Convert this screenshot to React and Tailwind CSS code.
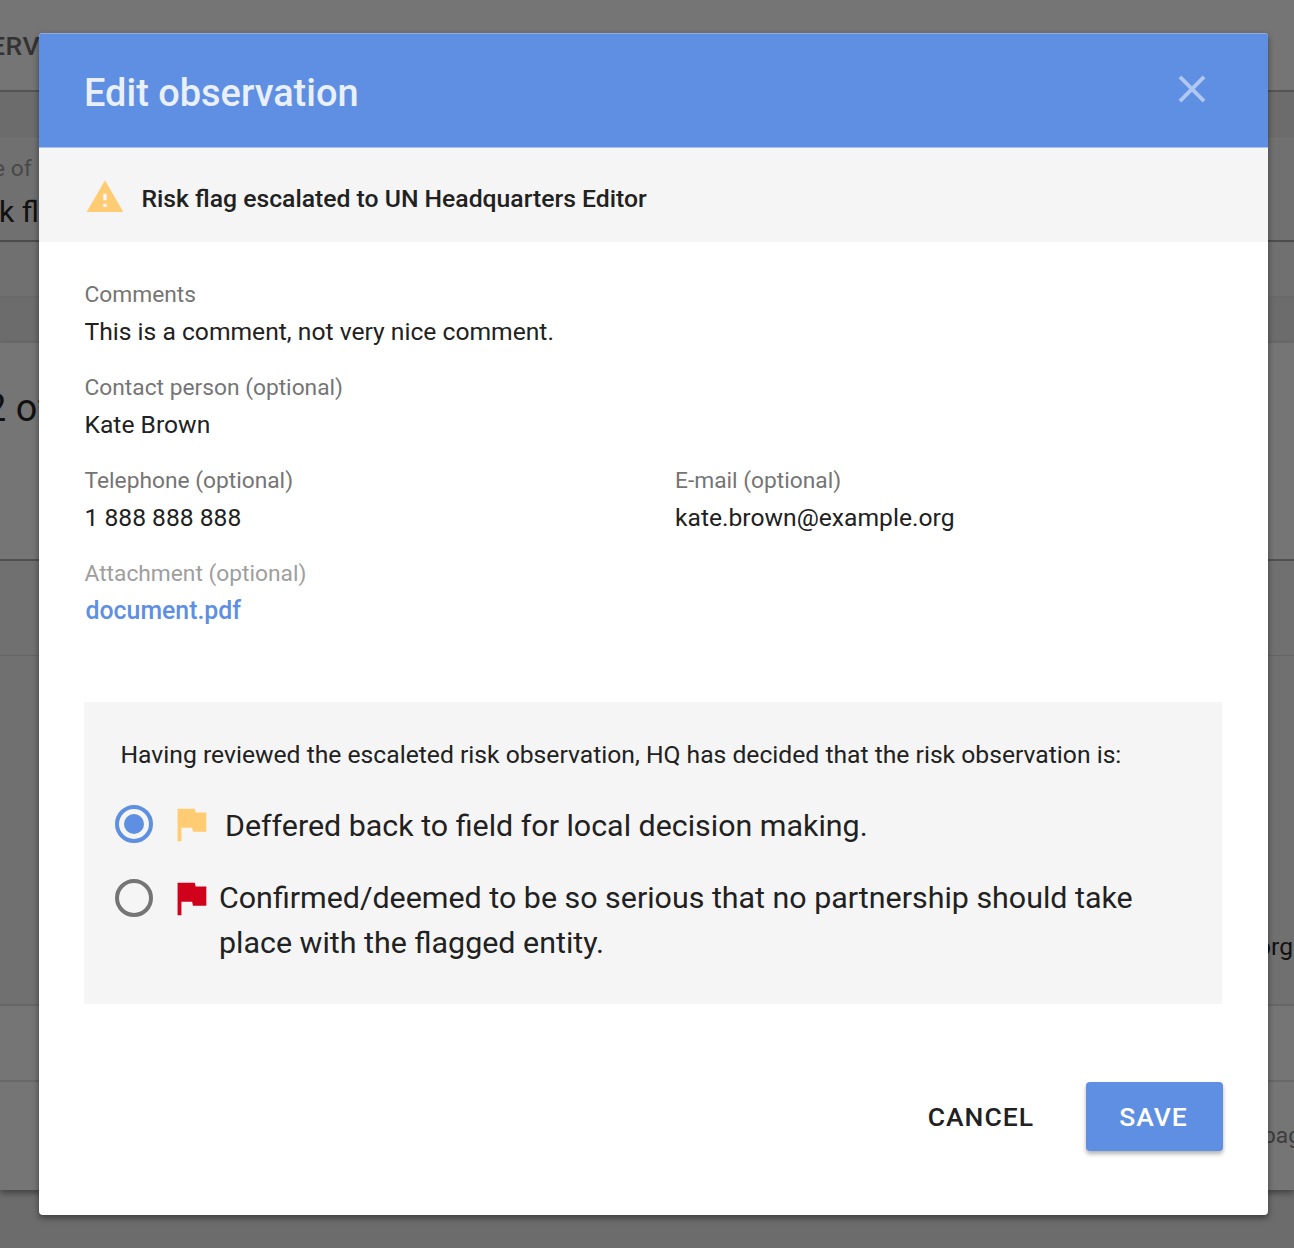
const FLAG = 'M14.4 6L14 4H5v17h2v-7h5.6l.4 2h7V6z';

function Icon({ path, className }) {
  return (
    <svg viewBox="0 0 24 24" fill="currentColor" className={className}>
      <path d={path} />
    </svg>
  );
}

function Field({ label, children, muted }) {
  return (
    <div className="h-[93px] flex-1 whitespace-nowrap">
      <div className={`text-[22.75px] leading-[37px] ${muted ? 'text-[#9e9e9e]' : 'text-[#757575]'}`}>{label}</div>
      <div className="text-[24.65px] leading-[37px] text-[#212121]">{children}</div>
    </div>
  );
}

function Radio({ checked }) {
  return (
    <span
      className={`flex size-[38px] shrink-0 items-center justify-center rounded-full border-4 ${checked ? 'border-[#5e8fe2]' : 'border-[#757575]'}`}
    >
      {checked && <span className="size-[20px] rounded-full bg-[#5e8fe2]" />}
    </span>
  );
}

function Backdrop() {
  return (
    <div className="flex h-full flex-col whitespace-nowrap bg-[#6c6c6c] text-[#111111]">
      <div className="h-[92px] shrink-0 border-b-2 border-[#545454] bg-[#757575] pt-[26px]">
        <div className="-ml-[10px] text-[26.5px] font-medium leading-[40px] tracking-[0.5px] text-[#333333]">ERV</div>
      </div>
      <div className="h-[46px] shrink-0" />
      <div className="h-[159px] shrink-0 border-y border-t-[#747474] border-b-[#686868] bg-[#707070]">
        <div className="h-[103px] border-b-2 border-[#4c4c4c] pt-[11px]">
          <div className="-ml-[7px] text-[22.75px] leading-[37px] text-[#484848]">e of</div>
          <div className="-ml-[1px] text-[30.3px] leading-[49px]">k fl</div>
        </div>
      </div>
      <div className="h-[46px] shrink-0" />
      <div className="flex h-[847px] shrink-0 flex-col bg-[#757575] shadow-[0_3px_6px_rgba(0,0,0,0.4)]">
        <div className="h-[218px] border-b-2 border-[#505050] pt-[40px]">
          <div className="-ml-[15px] text-[37.9px] leading-[50px]">2 of</div>
        </div>
        <div className="h-[95px] border-b border-[#646464] bg-[#707070]" />
        <div className="h-[350px] border-b-2 border-[#666666] bg-[#707070] pt-[272px]">
          <div className="ml-[1257px] text-[24.6px] leading-[37px]">org</div>
        </div>
        <div className="h-[76px] border-b-2 border-[#686868]" />
        <div className="pt-[35px]">
          <div className="ml-[1263px] text-[22.75px] leading-[37px] text-[#3c3c3c]">pag</div>
        </div>
      </div>
    </div>
  );
}

export default function App() {
  return (
    <div className="relative h-[1248px] w-[1294px] overflow-hidden font-['Roboto',sans-serif]">
      <Backdrop />
      <div className="absolute left-[39px] top-[33px] flex h-[1182px] w-[1229px] flex-col overflow-hidden rounded-[4px] bg-white text-[#212121] shadow-[0_3px_6px_rgba(0,0,0,0.45)]">
        <header className="flex h-[115px] shrink-0 items-center justify-between border-y border-t-[#8fabdb] border-b-[#a9c4f2] bg-[#5e8fe2] pl-[45px] pr-[53px]">
          <h1 className="pt-[4px] text-[37.95px] font-medium leading-[50px] text-[#e9f0fc]">Edit observation</h1>
          <Icon
            className="-mt-[4px] size-[46px] text-[#afc7f1]"
            path="M19 6.41L17.59 5 12 10.59 6.41 5 5 6.41 10.59 12 5 17.59 6.41 19 12 13.41 17.59 19 19 17.59 13.41 12z"
          />
        </header>
        <div className="flex h-[94px] shrink-0 items-center bg-[#f5f5f5] pl-[46px]">
          <Icon className="mt-[3px] size-[40px] text-[#ffcc73]" path="M1 21h22L12 2 1 21zm12-3h-2v-2h2v2zm0-4h-2v-4h2v4z" />
          <p className="ml-[16.5px] mt-[7px] text-[24.72px] font-medium leading-[37px]">Risk flag escalated to UN Headquarters Editor</p>
        </div>
        <section className="px-[45.5px] pt-[34px]">
          <Field label="Comments">This is a comment, not very nice comment.</Field>
          <Field label="Contact person (optional)">Kate Brown</Field>
          <div className="flex gap-[43px]">
            <Field label="Telephone (optional)">1 888 888 888</Field>
            <Field label="E-mail (optional)">kate.brown@example.org</Field>
          </div>
          <Field label="Attachment (optional)" muted>
            <a className="ml-[1px] text-[24.85px] font-medium text-[#5e8fe2]">document.pdf</a>
          </Field>
        </section>
        <section className="ml-[45px] mt-[54px] h-[302px] w-[1138px] shrink-0 bg-[#f5f5f5] pl-[31px] pt-[34px]">
          <p className="ml-[5.5px] whitespace-nowrap text-[24.68px] leading-[37px]">
            Having reviewed the escaleted risk observation, HQ has decided that the risk observation is:
          </p>
          <div className="mt-[32px] flex h-[38px] items-center">
            <Radio checked />
            <Icon className="ml-[14.5px] size-[46px] shrink-0 text-[#ffcc73]" path={FLAG} />
            <span className="ml-[11.5px] mt-[2px] whitespace-nowrap text-[30.4px] leading-[45px]">Deffered back to field for local decision making.</span>
          </div>
          <div className="mt-[36px] flex h-[38px] items-start">
            <Radio />
            <Icon className="-mt-[4px] ml-[14.5px] size-[46px] shrink-0 text-[#d0021b]" path={FLAG} />
            <span className="-mt-[4px] ml-[5.5px] whitespace-nowrap text-[30.4px] leading-[45px]">
              Confirmed/deemed to be so serious that no partnership should take
              <br />
              place with the flagged entity.
            </span>
          </div>
        </section>
        <footer className="mt-[78px] flex h-[69px] items-center justify-end pr-[45px] text-[26.5px] font-medium tracking-[1px]">
          <button className="mr-[52px]">CANCEL</button>
          <button className="h-[69px] w-[137px] rounded-[4px] bg-[#5e8fe2] pr-[2px] text-white shadow-[0_3px_4px_rgba(0,0,0,0.3)]">SAVE</button>
        </footer>
      </div>
    </div>
  );
}
